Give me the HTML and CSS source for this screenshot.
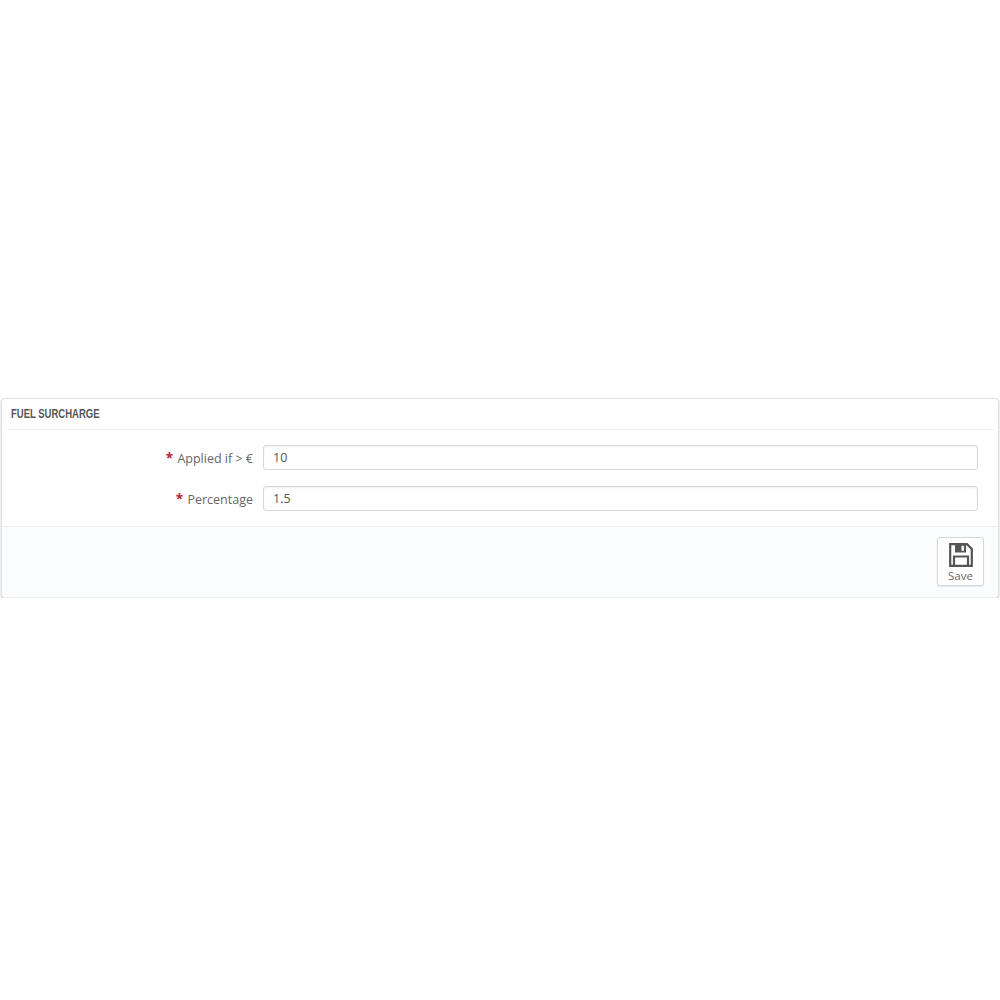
FILE: index.html
```html
<!DOCTYPE html>
<html lang="en">
  <head>
    <meta charset="UTF-8" />
    <meta name="viewport" content="width=device-width, initial-scale=1.0" />
    <title>Fuel surcharge</title>
    <link rel="stylesheet" href="styles.css">
  </head>
  <body>
    <form class="panel">
      <div class="panel-heading">
        <h3 class="panel-title">FUEL SURCHARGE</h3>
      </div>
      <div class="form-body">
        <div class="form-row">
          <label class="form-label" for="applied"><span class="required">*</span> Applied if &gt; €</label>
          <input class="form-input" type="text" id="applied" value="10" />
        </div>
        <div class="form-row">
          <label class="form-label" for="percentage"><span class="required">*</span> Percentage</label>
          <input class="form-input" type="text" id="percentage" value="1.5" />
        </div>
      </div>
      <div class="panel-footer">
        <button class="save-btn" type="button">
          <svg class="save-icon" width="24" height="24" viewBox="0 0 24 24">
            <path d="M1.2 1.2H18L22.8 6V22.8H1.2Z" fill="none" stroke="#555" stroke-width="2.2" />
            <path d="M6 1.2H17V9.5H6Z" fill="#555" />
            <rect x="12.5" y="2.8" width="2.4" height="5" fill="#fff" />
            <path d="M5 22.8V13.5H19V22.8" fill="none" stroke="#555" stroke-width="2.2" />
          </svg>
          <span>Save</span>
        </button>
      </div>
    </form>
  </body>
</html>
```

FILE: styles.css
```css
* {
  box-sizing: border-box;
}
body {
  margin: 0;
  padding: 398px 1px 0 1px;
  background-color: #fff;
  font-family: "Open Sans", sans-serif;
  color: #555;
}
.panel {
  height: 200px;
  padding: 0 4px;
  background-color: #fff;
  border: 1px solid #e2e4e7;
  border-bottom-color: #eeeeee;
  border-radius: 4px;
  box-shadow: 0 1px 2px rgba(0, 0, 0, 0.28);
  display: flex;
  flex-direction: column;
}
.panel-heading {
  height: 31px;
  padding: 0 5px;
  border-bottom: 1px solid #eeeeee;
}
.panel-title {
  margin: 0;
  line-height: 30px;
  font-family: "Liberation Sans", sans-serif;
  font-size: 12.5px;
  font-weight: 700;
  color: #555;
  transform: scaleX(0.76);
  transform-origin: left center;
}
.form-body {
  padding-top: 15px;
  display: flex;
  flex-direction: column;
  gap: 16px;
}
.form-row {
  display: flex;
  align-items: center;
  gap: 10px;
}
.form-label {
  width: 247px;
  text-align: right;
  font-size: 12.5px;
  color: #666;
}
.required {
  margin-right: 1px;
  color: #b0263c;
  font-size: 13.5px;
  font-weight: 700;
}
.form-input {
  width: 715px;
  height: 25px;
  padding: 0 9px;
  font-family: "Open Sans", sans-serif;
  font-size: 12.5px;
  color: #555;
  background-color: #fff;
  border: 1px solid #d3d8db;
  border-radius: 3px;
  box-shadow: inset 0 1px 2px rgba(0, 0, 0, 0.06);
}
.panel-footer {
  flex: 1;
  margin: 15px -4px 0 -4px;
  padding: 10px 14px 0 0;
  display: flex;
  justify-content: flex-end;
  align-items: flex-start;
  background-color: #fbfcfe;
  border-top: 1px solid #eeeeee;
  border-radius: 0 0 4px 4px;
}
.save-btn {
  width: 47px;
  height: 49px;
  padding: 5px 0 0 0;
  display: flex;
  flex-direction: column;
  align-items: center;
  gap: 2px;
  font-family: "Open Sans", sans-serif;
  font-size: 11.5px;
  line-height: 14px;
  color: #666;
  background-color: #fff;
  border: 1px solid #d3d8db;
  border-radius: 3px;
  box-shadow: 0 1px 1px rgba(0, 0, 0, 0.08);
}
```
